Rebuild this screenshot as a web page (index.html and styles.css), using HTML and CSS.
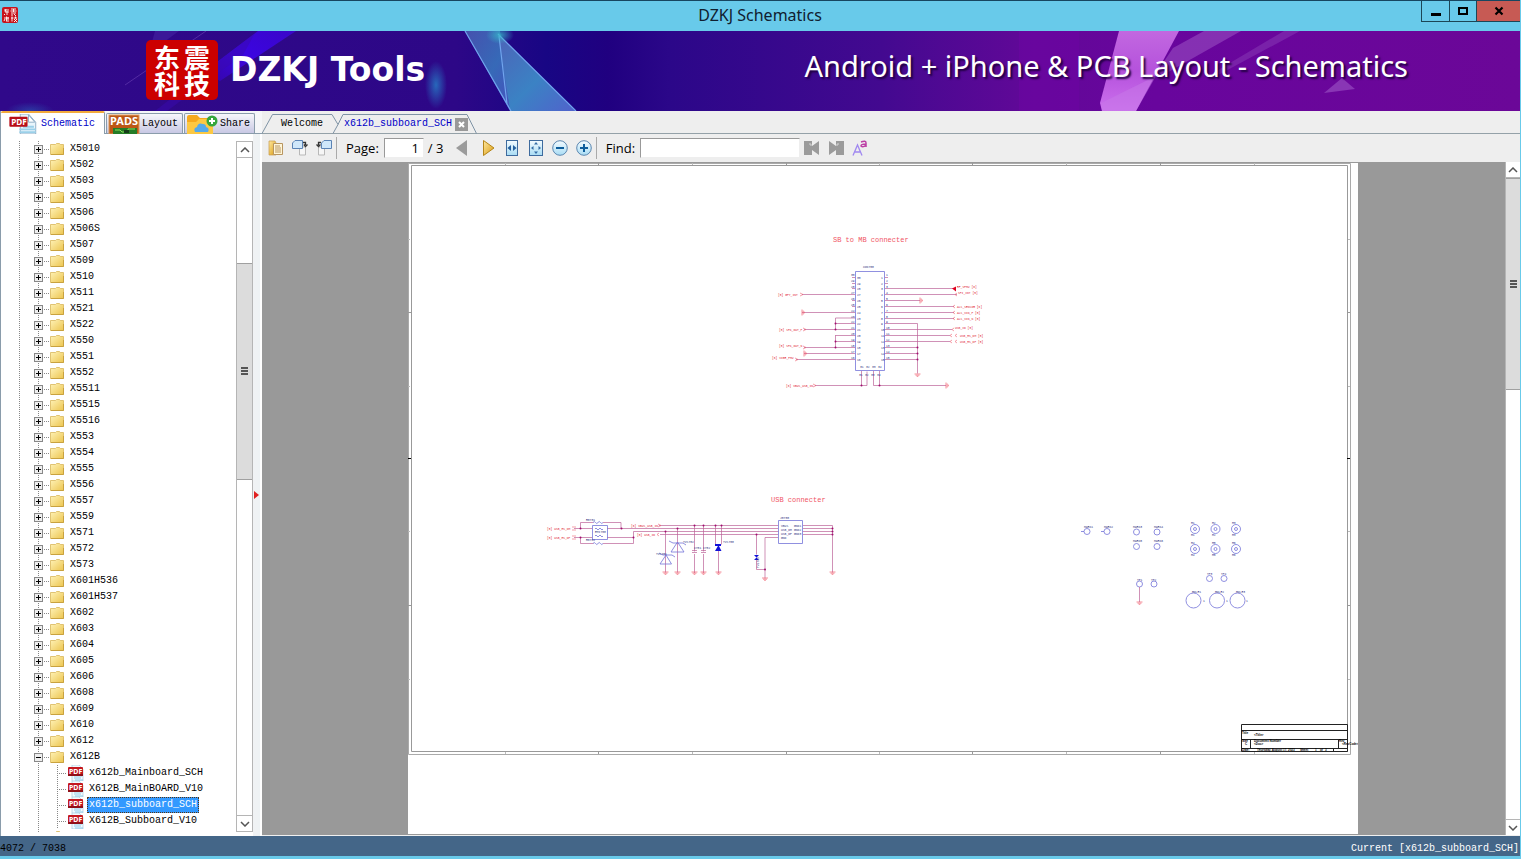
FILE: index.html
```html
<!DOCTYPE html>
<html lang="en">
<head>
<meta charset="utf-8">
<title>DZKJ Schematics</title>
<link rel="stylesheet" href="styles.css">
</head>
<body>
<svg class="defs" aria-hidden="true">
  <defs>
    <linearGradient id="gFolder" x1="0" y1="0" x2="1" y2="1"><stop offset="0" stop-color="#fff3b8"/><stop offset="1" stop-color="#ecc550"/></linearGradient>
    <linearGradient id="gBlue" x1="0" y1="0" x2="0" y2="1"><stop offset="0" stop-color="#f4fbff"/><stop offset="1" stop-color="#a8dcf4"/></linearGradient>
    <linearGradient id="gGold" x1="0" y1="0" x2="1" y2="1"><stop offset="0" stop-color="#ffe9a0"/><stop offset="1" stop-color="#d99a10"/></linearGradient>
    <symbol id="folder" viewBox="0 0 14 12"><path d="M.5 1.5h5l1-1h3l.8 1h3.2v10H.5z" fill="url(#gFolder)" stroke="#d8b65a" stroke-width=".8"/><path d="M1 11.5h12.5V5" fill="none" stroke="#c9a23f"/></symbol>
    <symbol id="pdf" viewBox="0 0 16 16"><path d="M4 0h7l4 4v12H4z" fill="#f2faff" stroke="#a8c8dc" stroke-width=".7"/><path d="M6 11h8M6 13h7M7 15h8" stroke="#8fcbe8"/><rect y="2" width="15" height="9" rx="1" fill="#c41820"/><path d="M0 9h15v2H0z" fill="#901018"/><text x="1" y="9" class="pdf-text">PDF</text></symbol>
    <g id="gndDown"><path d="M-3 0h6M-2 1.2h4M-.8 2.4h1.6" fill="none" stroke="#f06070" stroke-width=".7"/></g>
    <g id="gndSide"><path d="M0-3v6M1.2-2v4M2.4-.8v1.6" fill="none" stroke="#f06070" stroke-width=".7"/></g>
  </defs>
</svg>

<header class="titlebar">
  <svg class="app-icon" viewBox="0 0 16 16" aria-hidden="true"><rect width="16" height="16" rx="2" fill="#c8141c"/><path d="M2 3h5M4 2L3 5h4M5 4v4M3 7l-1 1M9 2h5M8.500 4h6M11.500 2v3M9 6h5M10 7v2M12 7l2 2M2 11h5M4.500 9.500v5M3 12l-1 2M6 10v5M9 11h2.500M10 9.500v5M12 11h3M13.500 9.500v2M12 12l3 3M15 12l-3 3" stroke="#fff" fill="none" stroke-width=".9"/></svg>
  <h1 class="window-title">DZKJ Schematics</h1>
  <div class="window-buttons">
    <button class="win-btn min" aria-label="Minimize"><svg viewBox="0 0 12 12"><path d="M1 8h10v3H1z"/></svg></button>
    <button class="win-btn max" aria-label="Maximize"><svg viewBox="0 0 12 12"><path d="M2 3h8v6H2z" fill="none" stroke="#000" stroke-width="2"/></svg></button>
    <button class="win-btn close" aria-label="Close"><svg viewBox="0 0 12 12"><path d="M2.500 2.500l7 7M9.500 2.500l-7 7" stroke="#000" stroke-width="2.200"/></svg></button>
  </div>
</header>

<section class="banner">
  <svg class="banner-art" viewBox="0 0 1520 80" preserveAspectRatio="none" aria-hidden="true">
    <defs>
      <linearGradient id="bg"><stop offset="0" stop-color="#30098a"/><stop offset=".3" stop-color="#2d0787"/><stop offset=".36" stop-color="#180684"/><stop offset=".4" stop-color="#200080"/><stop offset=".44" stop-color="#2b0789"/><stop offset=".58" stop-color="#430990"/><stop offset=".68" stop-color="#620898"/><stop offset=".76" stop-color="#68059d"/><stop offset="1" stop-color="#6b0798"/></linearGradient>
      <linearGradient id="st" x1="1" y1="0" x2="0" y2="1"><stop offset="0" stop-color="#3a06c8"/><stop offset=".5" stop-color="#3b05e0"/><stop offset="1" stop-color="#3506a8"/></linearGradient>
      <linearGradient id="cr" x1="0" y1="0" x2="1" y2="1"><stop offset="0" stop-color="#4d63b8"/><stop offset=".55" stop-color="#3b82c4"/><stop offset="1" stop-color="#5162cc"/></linearGradient>
      <linearGradient id="pk" x1="0" y1="0" x2="0" y2="1"><stop offset="0" stop-color="#c268e0"/><stop offset=".5" stop-color="#b552dc"/><stop offset="1" stop-color="#cc70ee"/></linearGradient>
      <radialGradient id="gl"><stop offset="0" stop-color="#2680c8" stop-opacity=".8"/><stop offset="1" stop-color="#2680c8" stop-opacity="0"/></radialGradient>
      <radialGradient id="gt"><stop offset="0" stop-color="#35b8ca" stop-opacity=".8"/><stop offset="1" stop-color="#35b8ca" stop-opacity="0"/></radialGradient>
    </defs>
    <rect width="1520" height="80" fill="url(#bg)"/>
    <path d="M258 0h38l-76 50-15-10z" fill="url(#st)"/><path d="M155 80l100-78-12 22-76 56z" fill="#390ab0" opacity=".5"/>
    <path d="M206 0l-48 33M125 54l22-15" stroke="#6c43b5" opacity=".6"/>
    <path d="M155 0h24l-30 22z" fill="#482aa8" opacity=".5"/>
    <ellipse cx="436" cy="54" rx="11" ry="24" fill="url(#gl)"/><ellipse cx="30" cy="80" rx="24" ry="9" fill="url(#gl)" opacity=".5"/>
    <path d="M465 0h35l10 80z" fill="url(#cr)" opacity=".8"/><path d="M498 3l78 77h-66z" fill="url(#cr)"/>
    <path d="M465 0l46 80M498 3l78 77M499 5l8 68" stroke="#70a4ed" stroke-width="1.200" fill="none"/>
    <ellipse cx="500" cy="4" rx="14" ry="9" fill="url(#gt)"/>
    <path d="M1019 0h60v80h-60z" fill="#6d04a4" opacity=".5"/>
    <path d="M1119 0h60l-43 80h-34l-2-8z" fill="url(#pk)"/><path d="M1101 72l55-27-20 35h-34z" fill="#c879e8" opacity=".5"/>
    <path d="M1204 0h37l-78 44-6-3 16-24z" fill="#9548be" opacity=".65"/><path d="M1284 0h16l-80 43-12 2z" fill="#8738b4" opacity=".55"/>
    <path d="M1324 62l18-15 13 11z" fill="#9142bc" opacity=".8"/>
  </svg>
  <div class="brand">
    <div class="seal" lang="zh"><span>东</span><span>震</span><span>科</span><span>技</span></div>
    <strong class="brand-name">DZKJ Tools</strong>
  </div>
  <p class="slogan">Android + iPhone &amp; PCB Layout - Schematics</p>
</section>

<main class="workspace">
  <aside class="sidebar">
    <nav class="side-tabs">
      <button class="side-tab active"><svg class="tab-pic" viewBox="0 0 32 22" aria-hidden="true"><path d="M13 0h9l8 9v13H13z" fill="#e9f5fb" stroke="#8baac2"/><path d="M22 1v8h7z" fill="#fff" stroke="#8baac2"/><path d="M16 14h12M12 17h18M12 20h18" stroke="#9ad0e9" stroke-width="2"/><rect x="1" y="3" width="20" height="11" rx="1" fill="#b80e18"/><text x="3" y="12" class="pdf-big">PDF</text></svg>Schematic</button>
      <button class="side-tab"><svg class="tab-pic" viewBox="0 0 32 20" aria-hidden="true"><rect x="1" y="1" width="30" height="19" fill="#bd5716" stroke="#e0a060"/><text x="2" y="11" class="pads">PADS</text><path d="M5 20v-6h24v6z" fill="#257c27"/><path d="M7 16h5l2 2h6v-3h7" stroke="#8de05a" fill="none"/><path d="M16 16h5v3h-5z" fill="#153d18"/></svg>Layout</button>
      <button class="side-tab"><svg class="tab-pic" viewBox="0 0 32 20" aria-hidden="true"><path d="M1 3q0-2 2-2h8l3 3h11q2 0 2 2v14H1z" fill="#f5a91d"/><path d="M1 8h9l3-3h14v15H1z" fill="#fcc842"/><path d="M9 18q-2-4 2-5 1-5 6-3 3 0 3 3 4 1 2 5z" fill="#55a9ea"/><circle cx="26" cy="7" r="5.500" fill="#35a63d"/><path d="M26 4v6M23 7h6" stroke="#fff" stroke-width="2"/></svg>Share</button>
    </nav>
    <div class="side-body">
      <div class="tree-wrap">
        <ul class="tree">
          <li class="node"><button class="toggle" aria-label="Expand"></button><svg class="folder"><use href="#folder"/></svg>X5010</li>
          <li class="node"><button class="toggle" aria-label="Expand"></button><svg class="folder"><use href="#folder"/></svg>X502</li>
          <li class="node"><button class="toggle" aria-label="Expand"></button><svg class="folder"><use href="#folder"/></svg>X503</li>
          <li class="node"><button class="toggle" aria-label="Expand"></button><svg class="folder"><use href="#folder"/></svg>X505</li>
          <li class="node"><button class="toggle" aria-label="Expand"></button><svg class="folder"><use href="#folder"/></svg>X506</li>
          <li class="node"><button class="toggle" aria-label="Expand"></button><svg class="folder"><use href="#folder"/></svg>X506S</li>
          <li class="node"><button class="toggle" aria-label="Expand"></button><svg class="folder"><use href="#folder"/></svg>X507</li>
          <li class="node"><button class="toggle" aria-label="Expand"></button><svg class="folder"><use href="#folder"/></svg>X509</li>
          <li class="node"><button class="toggle" aria-label="Expand"></button><svg class="folder"><use href="#folder"/></svg>X510</li>
          <li class="node"><button class="toggle" aria-label="Expand"></button><svg class="folder"><use href="#folder"/></svg>X511</li>
          <li class="node"><button class="toggle" aria-label="Expand"></button><svg class="folder"><use href="#folder"/></svg>X521</li>
          <li class="node"><button class="toggle" aria-label="Expand"></button><svg class="folder"><use href="#folder"/></svg>X522</li>
          <li class="node"><button class="toggle" aria-label="Expand"></button><svg class="folder"><use href="#folder"/></svg>X550</li>
          <li class="node"><button class="toggle" aria-label="Expand"></button><svg class="folder"><use href="#folder"/></svg>X551</li>
          <li class="node"><button class="toggle" aria-label="Expand"></button><svg class="folder"><use href="#folder"/></svg>X552</li>
          <li class="node"><button class="toggle" aria-label="Expand"></button><svg class="folder"><use href="#folder"/></svg>X5511</li>
          <li class="node"><button class="toggle" aria-label="Expand"></button><svg class="folder"><use href="#folder"/></svg>X5515</li>
          <li class="node"><button class="toggle" aria-label="Expand"></button><svg class="folder"><use href="#folder"/></svg>X5516</li>
          <li class="node"><button class="toggle" aria-label="Expand"></button><svg class="folder"><use href="#folder"/></svg>X553</li>
          <li class="node"><button class="toggle" aria-label="Expand"></button><svg class="folder"><use href="#folder"/></svg>X554</li>
          <li class="node"><button class="toggle" aria-label="Expand"></button><svg class="folder"><use href="#folder"/></svg>X555</li>
          <li class="node"><button class="toggle" aria-label="Expand"></button><svg class="folder"><use href="#folder"/></svg>X556</li>
          <li class="node"><button class="toggle" aria-label="Expand"></button><svg class="folder"><use href="#folder"/></svg>X557</li>
          <li class="node"><button class="toggle" aria-label="Expand"></button><svg class="folder"><use href="#folder"/></svg>X559</li>
          <li class="node"><button class="toggle" aria-label="Expand"></button><svg class="folder"><use href="#folder"/></svg>X571</li>
          <li class="node"><button class="toggle" aria-label="Expand"></button><svg class="folder"><use href="#folder"/></svg>X572</li>
          <li class="node"><button class="toggle" aria-label="Expand"></button><svg class="folder"><use href="#folder"/></svg>X573</li>
          <li class="node"><button class="toggle" aria-label="Expand"></button><svg class="folder"><use href="#folder"/></svg>X601H536</li>
          <li class="node"><button class="toggle" aria-label="Expand"></button><svg class="folder"><use href="#folder"/></svg>X601H537</li>
          <li class="node"><button class="toggle" aria-label="Expand"></button><svg class="folder"><use href="#folder"/></svg>X602</li>
          <li class="node"><button class="toggle" aria-label="Expand"></button><svg class="folder"><use href="#folder"/></svg>X603</li>
          <li class="node"><button class="toggle" aria-label="Expand"></button><svg class="folder"><use href="#folder"/></svg>X604</li>
          <li class="node"><button class="toggle" aria-label="Expand"></button><svg class="folder"><use href="#folder"/></svg>X605</li>
          <li class="node"><button class="toggle" aria-label="Expand"></button><svg class="folder"><use href="#folder"/></svg>X606</li>
          <li class="node"><button class="toggle" aria-label="Expand"></button><svg class="folder"><use href="#folder"/></svg>X608</li>
          <li class="node"><button class="toggle" aria-label="Expand"></button><svg class="folder"><use href="#folder"/></svg>X609</li>
          <li class="node"><button class="toggle" aria-label="Expand"></button><svg class="folder"><use href="#folder"/></svg>X610</li>
          <li class="node"><button class="toggle" aria-label="Expand"></button><svg class="folder"><use href="#folder"/></svg>X612</li>
          <li class="node"><button class="toggle open" aria-label="Collapse"></button><svg class="folder"><use href="#folder"/></svg>X612B</li>
          <li class="file"><svg class="pdf"><use href="#pdf"/></svg><a href="#mb-sch">x612b_Mainboard_SCH</a></li>
          <li class="file"><svg class="pdf"><use href="#pdf"/></svg><a href="#mb-v10">X612B_MainBOARD_V10</a></li>
          <li class="file"><svg class="pdf"><use href="#pdf"/></svg><a class="selected" href="#sb-sch">x612b_subboard_SCH</a></li>
          <li class="file"><svg class="pdf"><use href="#pdf"/></svg><a href="#sb-v10">X612B_Subboard_V10</a></li>
          <li class="node last"><svg class="folder"><use href="#folder"/></svg></li>
        </ul>
      </div>
      <div class="scrollbar side-scroll">
        <button class="arrow" aria-label="Scroll up"><svg viewBox="0 0 10 6"><path d="M1 5l4-4 4 4"/></svg></button>
        <div class="track"><div class="thumb"><i class="grip"></i></div></div>
        <button class="arrow" aria-label="Scroll down"><svg viewBox="0 0 10 6"><path d="M1 1l4 4 4-4"/></svg></button>
      </div>
      <div class="splitter"><svg viewBox="0 0 5 8" aria-hidden="true"><path d="M0 0l5 4-5 4z" fill="#e02020"/></svg></div>
    </div>
  </aside>

  <section class="viewer">
    <nav class="doc-tabs">
      <svg class="tab-lines" viewBox="0 0 216 23" aria-hidden="true"><path d="M0 22.500L10.500 3.500H70l6 10 5-10h1l2 0H205l9.500 19" fill="none" stroke="#7f93a5"/><path d="M76 13.500l-5 9" stroke="#7f93a5"/></svg>
      <button class="doc-tab first">Welcome</button>
      <button class="doc-tab current">x612b_subboard_SCH</button>
      <button class="tab-close" aria-label="Close tab"><svg viewBox="0 0 13 13"><path d="M4 4l5 5M9 4l-5 5" stroke="#fff" stroke-width="2"/></svg></button>
    </nav>

    <div class="toolbar">
      <button class="tool" aria-label="Open"><svg viewBox="0 0 16 16"><path d="M1 1h6l1 2v12H1z" fill="url(#gGold)" stroke="#c59a4a" stroke-width=".7"/><path d="M5.500 3.500h9v11h-9z" fill="#fff6d8" stroke="#b89560"/><path d="M7 6h5M7 8h6M7 10h6M7 12h6" stroke="#b89560"/></svg></button>
      <button class="tool" aria-label="Rotate right"><svg viewBox="0 0 16 16"><path d="M7.500 7h6v8h-6z" fill="#f6f6f6" stroke="#b8b8b8"/><path d="M3 .5h7.500v8H.5V3z" fill="#cfe7fa" stroke="#5b83b5"/><path d="M11 2.500h2.500V5M11.800 4.500l1.700 2 2-2" fill="none" stroke="#333" stroke-width="1.300"/></svg></button>
      <button class="tool" aria-label="Rotate left"><svg viewBox="0 0 16 16"><path d="M2.500 7h6v8h-6z" fill="#f6f6f6" stroke="#b8b8b8"/><path d="M8 .5h7.500v8h-10V3z" fill="#cfe7fa" stroke="#5b83b5"/><path d="M5 2.500H2.500V5M.5 4.500l2 2 2-2" fill="none" stroke="#333" stroke-width="1.300"/></svg></button>
      <i class="sep"></i>
      <label class="tool-label" for="page">Page:</label>
      <input class="page-input" id="page" value="1">
      <span class="page-total">/ 3</span>
      <button class="tool prev" aria-label="Previous page"><svg viewBox="0 0 16 16"><path d="M13 0v16L2 8z" fill="#9b9b9b"/></svg></button>
      <button class="tool" aria-label="Next page"><svg viewBox="0 0 16 16"><path d="M3.500.5v15L14 8z" fill="url(#gGold)" stroke="#b58518"/></svg></button>
      <button class="tool" aria-label="Fit width"><svg viewBox="0 0 16 16"><rect x="2.500" y=".5" width="11" height="15" fill="url(#gBlue)" stroke="#3e6b9e"/><path d="M7 5v6L3.500 8zM9 5v6l3.500-3z" fill="#255f9e"/></svg></button>
      <button class="tool" aria-label="Fit page"><svg viewBox="0 0 16 16"><rect x="1.500" y=".5" width="13" height="15" fill="url(#gBlue)" stroke="#3e6b9e"/><path d="M8 2l2 2.500H6zM8 14l2-2.500H6zM3 8l2.500-2v4zM13 8l-2.500-2v4z" fill="#336ca5"/></svg></button>
      <button class="tool" aria-label="Zoom out"><svg viewBox="0 0 16 16"><circle cx="8" cy="8" r="7.300" fill="url(#gBlue)" stroke="#5c87b0"/><path d="M4 8h8" stroke="#0d5d9c" stroke-width="2"/></svg></button>
      <button class="tool" aria-label="Zoom in"><svg viewBox="0 0 16 16"><circle cx="8" cy="8" r="7.300" fill="url(#gBlue)" stroke="#5c87b0"/><path d="M4 8h8M8 4v8" stroke="#0d5d9c" stroke-width="2"/></svg></button>
      <i class="sep"></i>
      <label class="tool-label" for="find">Find:</label>
      <input class="find-input" id="find">
      <button class="tool" aria-label="Find previous"><svg viewBox="0 0 16 16"><path d="M0 1h8v5l7-5v14l-7-5v5H0z" fill="#9b9b9b"/><path d="M5 4h2v2" stroke="#d5d5d5" fill="none"/></svg></button>
      <button class="tool" aria-label="Find next"><svg viewBox="0 0 16 16"><path d="M16 1H8v5L1 1v14l7-5v5h8z" fill="#9b9b9b"/><path d="M11 4H9v2" stroke="#d5d5d5" fill="none"/></svg></button>
      <button class="tool" aria-label="Match case"><svg viewBox="0 0 16 16"><path d="M1 15.500L5.500 5l4.500 10.500M3 12h5" fill="none" stroke="#a088f0" stroke-width="1.300"/><path d="M9 2q5-2 5 1V7M14 4q-5 0-5 2 2 2 5-1" fill="none" stroke="#bc3fa4" stroke-width="1.500"/></svg></button>
    </div>

    <div class="canvas">
      <div class="pages">
        <svg class="sheet" viewBox="408 163 950 671" role="img" aria-label="Sub board schematic">
          <g fill="none" stroke="#999"><path d="M408.500 163v591.500h942V163.500h-942" stroke="#aaa"/><path d="M411.500 165.500h936v586h-936z"/>
          <path d="M598.500 163v3M786.500 163v3M972.500 163v3M1160.500 163v3M598.500 751v3M786.500 751v3M972.500 751v3M1160.500 751v3M408 312.500h3M408 605.500h3M1347 312.500h3M1347 605.500h3"/>
          <path d="M505.500 163v2M692.500 163v2M879.500 163v2M1066.500 163v2M1254.500 163v2M505.500 752v2M692.500 752v2M879.500 752v2M1066.500 752v2M1254.500 752v2M408 239.500h2M408 386.500h2M408 531.500h2M408 679.500h2M1348 239.500h2M1348 386.500h2M1348 531.500h2M1348 679.500h2" stroke="#bbb"/><path d="M408 458.500h3M1347 458.500h3" stroke="#000"/></g>

          <g class="heading"><text x="833" y="242">SB to MB connecter</text><text x="771" y="502">USB connecter</text></g>

          <g class="wire">
            <path d="M802 294.500h53M802 312.500h53M804 329.500h51M835.500 318v12M835.500 318h20M835.500 323.500h20M804 347.500h51M835.500 335v13M835.500 335.500h20M835.500 341.500h20M804 353.500h51M796 359.500h59"/>
            <path d="M885 288.500h69M885 294.500h72M885 300.500h35M885 306.500h69M885 312.500h69M885 318.500h69M885 323.500h32.500v50M885 329.500h67M885 335.500h65M885 341.500h65M885 347.500h32M885 353.500h32M885 359.500h32"/>
            <path d="M815 385.500h52v-14M861.500 371v14M873.500 371v14.500H946M879.500 371v14"/>
            <path d="M852 277.500h3M852 283.500h3M852 288.500h3M852 300.500h3M852 306.500h3M885 277.500h3M885 283.500h3"/>
          </g>
          <path class="part" d="M855.500 271.500h29v99h-29z"/>
          <g class="dot"><circle cx="835.500" cy="323.500" r="1"/><circle cx="835.500" cy="329.500" r="1"/><circle cx="835.500" cy="341.500" r="1"/><circle cx="835.500" cy="347.500" r="1"/><circle cx="917.500" cy="347.500" r="1"/><circle cx="917.500" cy="353.500" r="1"/><circle cx="917.500" cy="359.500" r="1"/><circle cx="861.500" cy="385.500" r="1"/><circle cx="879.500" cy="385.500" r="1"/></g>
          <path d="M952 288.500l4-2v5z" fill="#e00020"/>
          <use href="#gndDown" x="917.500" y="374"/><use href="#gndSide" x="920" y="300.500"/><use href="#gndSide" x="946" y="385.500"/><use href="#gndSide" x="802" y="312.500"/><use href="#gndSide" x="804" y="353.500"/>
          <g class="port"><path d="M800 293l3 1.500-3 1.500M803 328l3 1.500-3 1.500M803 346l3 1.500-3 1.500M795 358l3 1.500-3 1.500M813 384l3 1.500-3 1.500M957 293l-2 1.500 2 1.500M955 305l-2 1.500 2 1.500M955 311l-2 1.500 2 1.500M955 317l-2 1.500 2 1.500M954 328l-2 1.500 2 1.500M952 334l-2 1.500 2 1.500M952 340l-2 1.500 2 1.500M957 334l-2 1.500 2 1.500M957 340l-2 1.500 2 1.500"/></g>
          <g class="net">
            <text x="778" y="296">[5]  GPY_INT</text><text x="779" y="331">[5] SPK_OUT_P</text><text x="779" y="347">[5] SPK_OUT_N</text><text x="772" y="359">[6] VIBR_PMU</text><text x="786" y="387">[6] VBUS_USB_IN</text>
            <text x="957" y="288">RF_VPMU [6]</text><text x="958" y="294">SPI_INT [5]</text><text x="957" y="308">ALS_SENSOR [6]</text><text x="957" y="314">ALS_VIN_P [5]</text><text x="957" y="320">ALS_VIN_N [5]</text><text x="955" y="329">USB_ID  [5]</text><text x="960" y="337">USB_HS_DM [5]</text><text x="960" y="343">USB_HS_DP [5]</text>
          </g>
          <g class="pin">
            <text x="863" y="268">CON700</text>
            <text x="851" y="276">30</text><text x="851" y="282">29</text><text x="851" y="288">28</text><text x="851" y="294">27</text><text x="851" y="300">26</text><text x="851" y="306">25</text><text x="851" y="312">24</text><text x="851" y="318">23</text><text x="851" y="323">22</text><text x="851" y="329">21</text><text x="851" y="335">20</text><text x="851" y="341">19</text><text x="851" y="347">18</text><text x="851" y="353">17</text><text x="851" y="359">16</text>
            <text x="857" y="279">30</text><text x="857" y="285">29</text><text x="857" y="290">28</text><text x="857" y="296">27</text><text x="857" y="302">26</text><text x="857" y="308">25</text><text x="857" y="314">24</text><text x="857" y="320">23</text><text x="857" y="325">22</text><text x="857" y="331">21</text><text x="857" y="337">20</text><text x="857" y="343">19</text><text x="857" y="349">18</text><text x="857" y="355">17</text><text x="857" y="361">16</text>
            <text x="881" y="279">1</text><text x="881" y="285">2</text><text x="881" y="290">3</text><text x="881" y="296">4</text><text x="881" y="302">5</text><text x="881" y="308">6</text><text x="881" y="314">7</text><text x="881" y="320">8</text><text x="881" y="325">9</text><text x="881" y="331">10</text><text x="881" y="337">11</text><text x="881" y="343">12</text><text x="881" y="349">13</text><text x="881" y="355">14</text><text x="881" y="361">15</text>
            <text x="886" y="276">1</text><text x="886" y="282">2</text><text x="886" y="288">3</text><text x="886" y="294">4</text><text x="886" y="300">5</text><text x="886" y="306">6</text><text x="886" y="312">7</text><text x="886" y="318">8</text><text x="886" y="323">9</text><text x="886" y="329">10</text><text x="886" y="335">11</text><text x="886" y="341">12</text><text x="886" y="347">13</text><text x="886" y="353">14</text><text x="886" y="359">15</text>
            <text x="860" y="368">31</text><text x="866" y="368">32</text><text x="872" y="368">33</text><text x="878" y="368">34</text><text x="859" y="376">31</text><text x="865" y="376">32</text><text x="871" y="376">33</text><text x="877" y="376">34</text>
          </g>

          <g class="wire">
            <path d="M574 528.500h18M574 537.500h18M580.500 528.500v-6h13M603 522.500h18v6M580.500 537.500v6h13M603 543.500h30.500v-12h145M607 537.500h26M607 528.500h171M659 525.500h119M660 534.500h118M665.500 531.500v41M677.500 528.500v44M694.500 525.500v26M694.500 554v19M703.500 525.500v26M703.500 554v19M715.500 525.500v19M721.500 525.500v19M718.500 551v22M756.500 534.500v20M756.500 560v9.500h8.500M778 537.500h-13v41M803 525.500h29.500v47M803 528.500h29M803 531.500h29M803 534.500h29M692 550.500h5M692 552.500h5M701 550.500h5M701 552.500h5"/>
          </g>
          <g class="part"><path d="M593 522.500q1.200-2 2.500 0t2.500 0 2.500 0 2.500 0M593 543.500q1.200-2 2.500 0t2.500 0 2.500 0 2.500 0M592.500 525.500h15v14h-15zM595 529q1-2 2 0t2 0 2 0 2 0M595 536q1-2 2 0t2 0 2 0 2 0M671 552l6.500-10 6.500 10zM660 564l6-9 5.500 9zM669 541l4 2h10l3 2M659 553l4 2h9l3 2M778.500 520.500h24v23h-24z"/></g>
          <path d="M715 551l3.500-6 3 6zM715 544h6v2h-6zM754 555h5l-2.500 2.500 2.500 2.500h-5l2.500-2.500z" fill="#1212d8"/>
          <g class="dot"><circle cx="580.500" cy="528.500" r="1"/><circle cx="580.500" cy="537.500" r="1"/><circle cx="621.500" cy="528.500" r="1"/><circle cx="633.500" cy="537.500" r="1"/><circle cx="665.500" cy="531.500" r="1"/><circle cx="677.500" cy="528.500" r="1"/><circle cx="694.500" cy="525.500" r="1"/><circle cx="703.500" cy="525.500" r="1"/><circle cx="715.500" cy="525.500" r="1"/><circle cx="721.500" cy="525.500" r="1"/><circle cx="756.500" cy="534.500" r="1"/><circle cx="765" cy="569.500" r="1"/><circle cx="832.500" cy="528.500" r="1"/><circle cx="832.500" cy="531.500" r="1"/><circle cx="832.500" cy="534.500" r="1"/></g>
          <use href="#gndDown" x="665.500" y="572"/><use href="#gndDown" x="677.500" y="572"/><use href="#gndDown" x="694.500" y="572"/><use href="#gndDown" x="703.500" y="572"/><use href="#gndDown" x="718.500" y="572"/><use href="#gndDown" x="765" y="578"/><use href="#gndDown" x="832.500" y="572"/>
          <g class="net"><text x="547" y="530">[5] USB_HS_DM</text><text x="547" y="539">[5] USB_HS_DP</text><text x="631" y="527">[6] VBUS_USB_IN</text><text x="637" y="536">[5] USB_ID</text></g>
          <g class="port"><path d="M572 527h4M572 530h4M572 536h4M572 539h4M658 524l3 1.500-3 1.500M659 533l-2 1.500 2 1.500"/></g>
          <g class="pin"><text x="586" y="521">R0701</text><text x="586" y="541">R0702</text><text x="595" y="533">EMI700</text><text x="683" y="543">TVS702</text><text x="656" y="555">TVS701</text><text x="694" y="549">C701 C702</text><text x="723" y="543">TVS700</text><text x="780" y="519">J0700</text><text x="781" y="527">VBUS</text><text x="781" y="531">USB_DM</text><text x="781" y="535">USB_DP</text><text x="781" y="539">GND</text><text x="794" y="527">GND1</text><text x="794" y="531">GND2</text><text x="794" y="535">GND3</text><text transform="translate(759 568) rotate(-90)">TVS703</text></g>

          <g class="part">
            <circle cx="1087" cy="531.500" r="3"/><circle cx="1107" cy="531.500" r="3"/><path d="M1081 531.500h3M1101 531.500h3"/>
            <circle cx="1136.500" cy="532" r="3"/><circle cx="1157" cy="532" r="3"/><circle cx="1136.500" cy="546.500" r="3"/><circle cx="1157" cy="546.500" r="3"/>
            <circle cx="1195" cy="529" r="4.500"/><circle cx="1195" cy="529" r="1.500"/><circle cx="1215.500" cy="529" r="4.500"/><circle cx="1215.500" cy="529" r="1.500"/><circle cx="1236" cy="529" r="4.500"/><circle cx="1236" cy="529" r="1.500"/>
            <circle cx="1195" cy="549" r="4.500"/><circle cx="1195" cy="549" r="1.500"/><circle cx="1215.500" cy="549" r="4.500"/><circle cx="1215.500" cy="549" r="1.500"/><circle cx="1236" cy="549" r="4.500"/><circle cx="1236" cy="549" r="1.500"/>
            <circle cx="1139.500" cy="584" r="3"/><circle cx="1154" cy="584" r="3"/><circle cx="1209.500" cy="578.500" r="3"/><circle cx="1224" cy="578.500" r="3"/>
            <circle cx="1193.500" cy="600.500" r="7.500"/><circle cx="1217" cy="600.500" r="7.500"/><circle cx="1237.500" cy="600.500" r="7.500"/>
          </g>
          <path class="wire" d="M1139.500 587v15"/><use href="#gndDown" x="1139.500" y="602"/>
          <g class="pin"><text x="1084" y="528">MARK1</text><text x="1104" y="528">MARK2</text><text x="1133" y="528">MARK3</text><text x="1154" y="528">MARK4</text><text x="1133" y="542">MARK5</text><text x="1154" y="542">MARK6</text><text x="1191" y="524">H1</text><text x="1212" y="524">H2</text><text x="1232" y="524">H3</text><text x="1191" y="536">H1</text><text x="1212" y="536">H2</text><text x="1232" y="536">H3</text><text x="1191" y="544">H4</text><text x="1212" y="544">H5</text><text x="1232" y="544">H6</text><text x="1191" y="556">H4</text><text x="1212" y="556">H5</text><text x="1232" y="556">H6</text><text x="1137" y="581">TP1</text><text x="1151" y="581">TP2</text><text x="1207" y="575">TP3</text><text x="1221" y="575">TP4</text><text x="1192" y="593">HOLE1</text><text x="1215" y="593">HOLE2</text><text x="1236" y="593">HOLE3</text><text x="1203" y="602">1</text><text x="1226" y="602">1</text><text x="1246" y="602">1</text></g>

          <path d="M1241.500 724.500h106v27h-106zM1241.500 730.500h106M1241.500 739.500h106M1241.500 748.500h106M1250.500 739.500v9M1338.500 739.500v9M1333.500 748.500v3" fill="none" stroke="#222"/>
          <g class="block"><text x="1242" y="734">Title</text><text x="1254" y="736">&lt;Title&gt;</text><text x="1242" y="742">Size</text><text x="1245" y="745">C</text><text x="1254" y="742">Document Number</text><text x="1254" y="745">&lt;Doc&gt;</text><text x="1339" y="742">Rev</text><text x="1342" y="745">&lt;RevCode&gt;</text><text x="1242" y="751">Date:</text><text x="1257" y="751">Thursday, August 17, 2023</text><text x="1300" y="751">Sheet</text><text x="1315" y="751">1</text><text x="1320" y="751">of</text><text x="1325" y="751">3</text></g>
        </svg>
      </div>
      <div class="scrollbar main-scroll">
        <button class="arrow" aria-label="Scroll up"><svg viewBox="0 0 10 6"><path d="M1 5l4-4 4 4"/></svg></button>
        <div class="track"><div class="thumb"><i class="grip"></i></div></div>
        <button class="arrow" aria-label="Scroll down"><svg viewBox="0 0 10 6"><path d="M1 1l4 4 4-4"/></svg></button>
      </div>
    </div>
  </section>
</main>

<footer class="statusbar"><span class="count">4072 / 7038</span><span class="current-file">Current [x612b_subboard_SCH]</span></footer>
</body>
</html>
```
FILE: styles.css
```css
* { box-sizing: border-box; }
html, body { height: 100%; }
body {
  margin: 0;
  display: flex;
  flex-direction: column;
  overflow: hidden;
  background: #f0f0f0;
  border-right: 1px solid #68caea;
  border-bottom: 3px solid #68caea;
  font: 10px/16px "Liberation Mono", monospace;
  color: #000;
}
button { padding: 0; border: 0; background: none; font: inherit; color: inherit; }
svg { display: block; }
.defs { position: absolute; width: 0; height: 0; }

/* Title bar */
.titlebar {
  flex: none;
  height: 31px;
  display: grid;
  grid-template-columns: 1fr auto 1fr;
  align-items: center;
  background: #68caea;
  border-top: 1px solid #174660;
}
.app-icon { width: 16px; height: 16px; margin: 0 0 2px 2px; }
.window-title { margin: 0 0 2px; font: 400 16px/28px "Noto Sans", sans-serif; color: #102030; }
.window-buttons { justify-self: end; align-self: start; display: flex; margin-right: -1px; }
.win-btn { height: 21px; width: 27px; display: grid; place-items: center; border: 1px solid #1c4656; border-top: 0; border-right: 0; }
.win-btn svg { width: 12px; height: 12px; }
.win-btn.min { width: 28px; }
.win-btn.close { width: 45px; background: #c75a54; }

/* Banner */
.banner {
  position: relative;
  flex: none;
  height: 80px;
  display: flex;
  align-items: center;
  justify-content: space-between;
  padding: 0 112px 0 146px;
  color: #fff;
}
.banner-art { position: absolute; inset: 0; width: 100%; height: 100%; }
.brand { position: relative; display: flex; align-items: center; gap: 12px; padding-bottom: 2px; }
.seal {
  width: 72px;
  height: 60px;
  display: grid;
  grid-template: 26px 26px / 30px 30px;
  place-content: center;
  justify-items: center;
  background: #cc0000;
  border-radius: 5px;
  font: 700 26px/26px "Noto Sans CJK SC", sans-serif;
}
.brand-name { font: 700 33px/40px "DejaVu Sans", sans-serif; }
.slogan { position: relative; margin: 0 0 10px; font: 400 29px/40px "Noto Sans", sans-serif; text-shadow: 2px 2px 2px #200040; white-space: nowrap; }

/* Workspace */
.workspace { flex: 1; min-height: 0; display: flex; }
.sidebar { flex: none; width: 262px; display: flex; flex-direction: column; background: #f5f6f8; border-left: 1px solid #8a9cab; }
.side-tabs { flex: none; height: 23px; display: flex; align-items: flex-end; gap: 1px; border-bottom: 1px solid #8a9cab; }
.side-tab {
  height: 20px;
  display: flex;
  align-items: center;
  gap: 2px;
  padding: 0 4px 0 1px;
  border: 1px solid #8a9cab;
  border-bottom: 0;
  border-radius: 2px 2px 0 0;
  background: linear-gradient(#f7f7fb, #c8c8e4);
}
.side-tab.active { height: 23px; width: 104px; margin-bottom: -1px; padding-left: 6px; border: 0; border-top: 2px solid #f2aa3c; border-right: 1px solid #8a9cab; background: #fff; color: #0000c8; }
.tab-pic { width: 32px; height: 20px; }
.pdf-big { font: 700 9px "Noto Sans", sans-serif; fill: #fff; }
.pads { font: 700 11px "Noto Sans", sans-serif; fill: #fff; }
.pdf-text { font: 700 7px "Noto Sans", sans-serif; fill: #fff; }
.side-body { flex: 1; min-height: 0; display: flex; padding: 7px 0 4px; background: linear-gradient(90deg, #fff 252px, #f0f2f4 252px, #eef2f4 259px, #fff 259px); }
.tree-wrap { flex: 1; min-width: 0; overflow: hidden; }
.tree {
  margin: 0;
  padding: 0;
  list-style: none;
  background:
    repeating-linear-gradient(#888 0 1px, transparent 1px 2px) 18px 0 / 1px 100% no-repeat,
    repeating-linear-gradient(#888 0 1px, transparent 1px 2px) 37px 0 / 1px 100% no-repeat;
}
.node, .file { height: 16px; display: flex; align-items: center; white-space: nowrap; }
.node { padding-left: 33px; }
.toggle {
  width: 9px;
  height: 9px;
  border: 1px solid #888;
  background:
    linear-gradient(#000, #000) center / 5px 1px no-repeat,
    linear-gradient(#000, #000) center / 1px 5px no-repeat,
    #eee;
}
.toggle.open { background: linear-gradient(#000, #000) center / 5px 1px no-repeat, #eee; }
.folder { width: 14px; height: 12px; margin-right: 6px; }
.toggle + .folder { padding-left: 7px; width: 21px; background: repeating-linear-gradient(90deg, transparent 0 1px, #888 1px 2px) 0 50% / 7px 1px no-repeat; }
.last { padding-left: 49px; }
.file {
  padding-left: 67px;
  gap: 3px;
  background:
    repeating-linear-gradient(#888 0 1px, transparent 1px 2px) 56px 0 / 1px 100% no-repeat,
    repeating-linear-gradient(90deg, #888 0 1px, transparent 1px 2px) 56px 8px / 10px 1px no-repeat;
}
.pdf { width: 16px; height: 16px; }
.file a { padding: 0 1px; color: inherit; text-decoration: none; line-height: 14px; border: 1px solid transparent; }
.file a.selected { background: #3399ff; color: #fff; border: 1px dotted #553311; }

/* Scroll bars */
.scrollbar { flex: none; display: flex; flex-direction: column; background: #fff; border: 1px solid #b5b5b5; }
.arrow { flex: none; height: 16px; display: grid; place-items: center; border-bottom: 1px solid #b5b5b5; }
.arrow:last-child { border-bottom: 0; border-top: 1px solid #b5b5b5; }
.arrow svg { width: 10px; height: 6px; }
.arrow path { fill: none; stroke: #555; stroke-width: 1.5; }
.track { flex: 1; min-height: 0; }
.thumb { display: grid; place-items: center; background: #dcdcdc; border: solid #a0a0a0; border-width: 1px 0; }
.grip { width: 7px; height: 8px; background: repeating-linear-gradient(#555 0 2px, transparent 2px 3px); }
.side-scroll { width: 17px; }
.side-scroll .thumb { height: 33%; margin-top: 105px; }
.main-scroll { width: 15px; border-width: 0 0 0 1px; }
.main-scroll .thumb { height: 33%; }
.splitter { flex: none; width: 9px; display: flex; align-items: center; padding: 16px 0 0 1px; }
.splitter svg { width: 5px; height: 8px; }

/* Viewer */
.viewer { flex: 1; min-width: 0; display: flex; flex-direction: column; }
.doc-tabs { position: relative; flex: none; height: 23px; display: flex; align-items: center; padding: 4px 0 0 19px; border-bottom: 1px solid #94a1a8; background: #eee; }
.tab-lines { position: absolute; left: 0; top: 0; width: 216px; height: 23px; }
.doc-tab, .tab-close { position: relative; }
.doc-tab.current { margin-left: 21px; color: #0000c8; }
.tab-close { width: 13px; height: 13px; margin-left: 3px; background: #999; }
.toolbar { flex: none; height: 28px; display: flex; align-items: center; padding-left: 2px; background: #eee; font: 400 13px/20px "Open Sans", sans-serif; }
.tool { flex: none; width: 24px; height: 24px; display: grid; place-items: center; }
.tool svg { width: 16px; height: 16px; }
.tool.prev { margin-right: 2px; }
.sep { width: 1px; height: 22px; background: #aaa; }
.tool-label { padding: 0 5px 0 9px; }
.page-input, .find-input { height: 20px; padding: 0 4px; border: 1px solid #999; border-right-color: #eee; border-bottom-color: #eee; border-radius: 0; background: #fff; font: inherit; }
.page-input { width: 40px; text-align: right; }
.find-input { width: 160px; }
.page-total { width: 26px; padding-left: 4px; white-space: nowrap; }
.canvas { flex: 1; min-height: 0; display: flex; background: #999; margin-bottom: 1px; }
.pages { flex: 1; min-width: 0; display: flex; justify-content: center; overflow: hidden; padding: 1px 1px 0 0; }
.sheet { flex: none; width: 950px; height: 671px; background: #fff; }
.heading text { font: 7px "Liberation Mono", monospace; fill: #f05565; }
.wire { fill: none; stroke: #bc6298; stroke-width: .7; }
.part { fill: none; stroke: #7474d8; stroke-width: .8; }
.dot { fill: #a01070; }
.port { fill: none; stroke: #ee6070; stroke-width: .6; }
.net text { font: 3px "Liberation Mono", monospace; fill: #e02030; }
.pin text { font: 3px "Liberation Mono", monospace; fill: #303080; }
.block text { font: 700 3px "Liberation Sans", sans-serif; fill: #000; }

/* Status bar */
.statusbar { flex: none; height: 20px; display: flex; align-items: center; justify-content: space-between; padding-top: 6px; background: #446688; }
.current-file { color: #fff; padding-right: 1px; }
```
